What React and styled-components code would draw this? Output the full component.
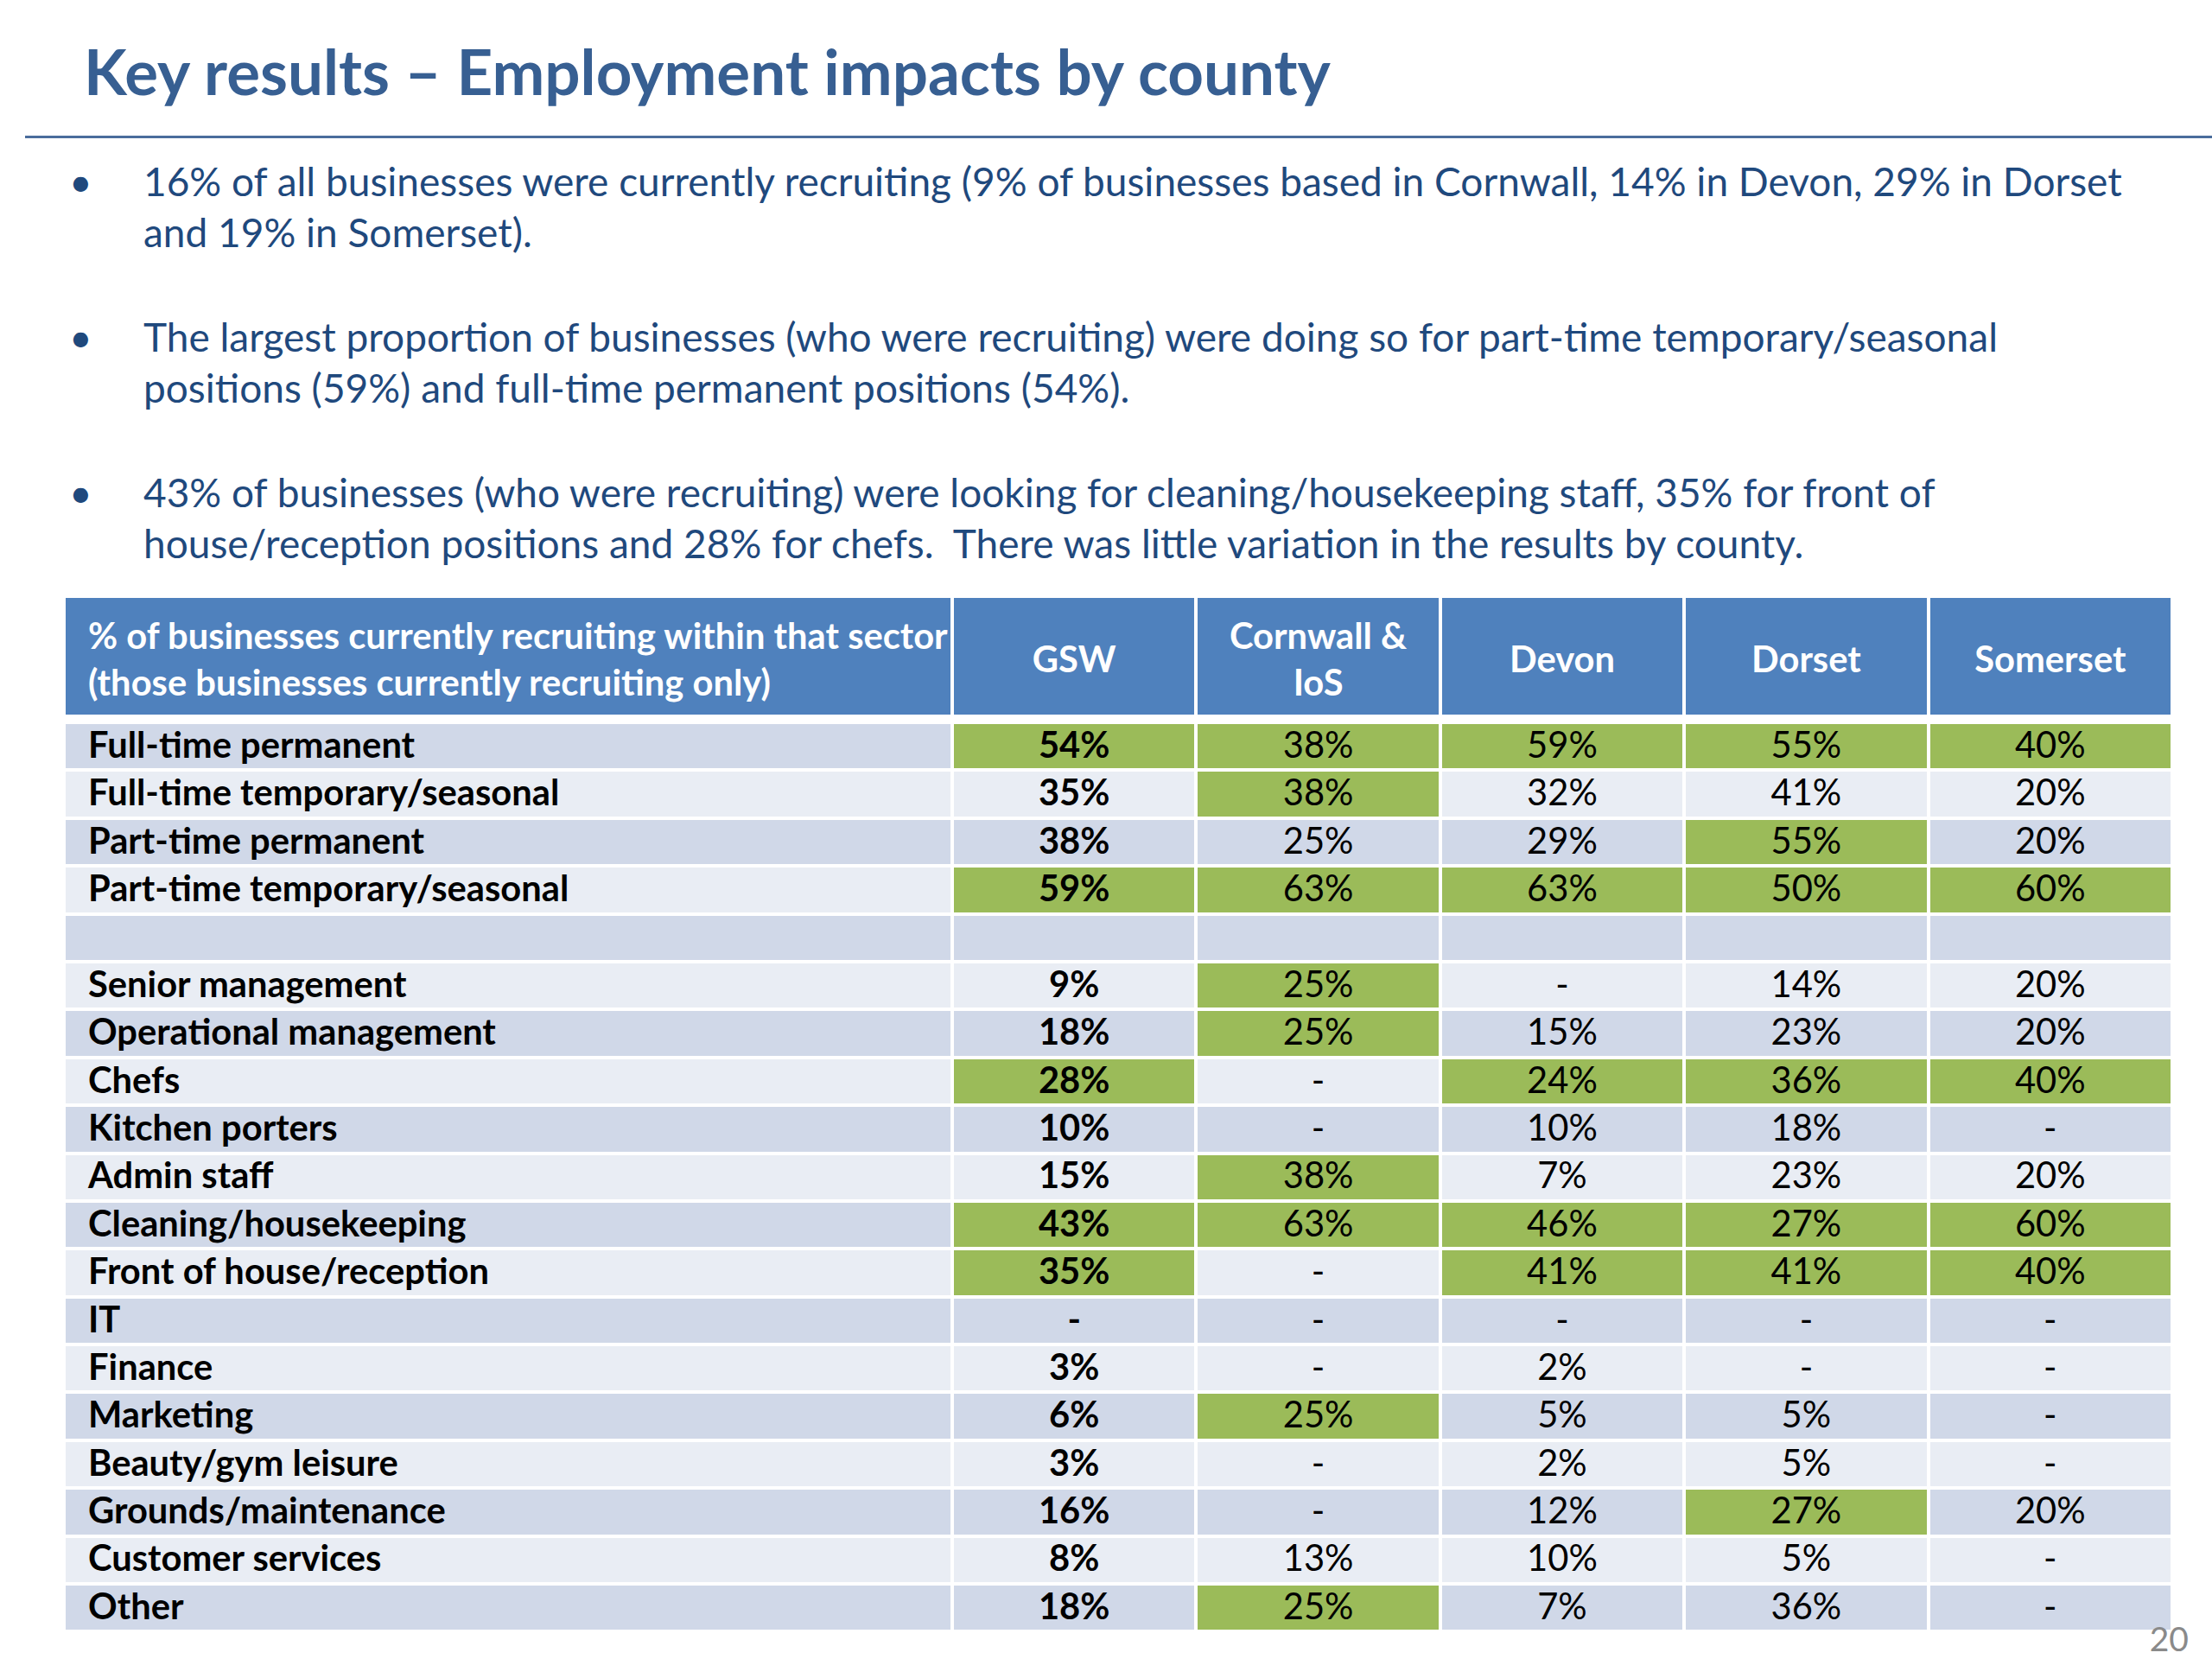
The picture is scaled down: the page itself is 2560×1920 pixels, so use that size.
import React from 'react';
import styled, { createGlobalStyle } from 'styled-components';

const GlobalStyle = createGlobalStyle`
  html, body { margin: 0; padding: 0; background: #ffffff; }
  body { font-family: Lato, "Noto Sans", sans-serif; }
  #root { width: 2560px; }
`;

const Slide = styled.div`
  width: 2560px;
  height: 1920px;
  background: #ffffff;
  display: flex;
  flex-direction: column;
  overflow: hidden;
`;

const Title = styled.h1`
  margin: 39px 0 0 97px;
  font: 700 72.7px/86px Lato, "Noto Sans", sans-serif;
  color: #375f92;
  white-space: nowrap;
`;

const Rule = styled.div`
  margin: 32px 0 0 29px;
  height: 3px;
  background: #4a6d9c;
`;

const Bullets = styled.ul`
  list-style: none;
  margin: 20px 0 0 80px;
  padding: 0;
  display: flex;
  flex-direction: column;
  gap: 62px;
`;

const BulletItem = styled.li`
  display: flex;
  font: 400 46px/59px Lato, "Noto Sans", sans-serif;
  color: #1f497d;
  white-space: nowrap;
`;

const Dot = styled.span`
  flex: none;
  width: 86px;
`;

const Table = styled.div`
  margin: 34px 0 0 76px;
  width: 2436px;
  display: flex;
  flex-direction: column;
`;

const HeadRow = styled.div`
  display: grid;
  grid-template-columns: 1024px repeat(5, 1fr);
  grid-template-rows: 135px;
  column-gap: 4px;
`;

const HeadCell = styled.div`
  background: #4f81bd;
  color: #ffffff;
  font: 700 41.7px/54px Lato, "Noto Sans", sans-serif;
  display: flex;
  align-items: center;
  justify-content: ${(p) => (p.$left ? 'flex-start' : 'center')};
  text-align: ${(p) => (p.$left ? 'left' : 'center')};
  padding: ${(p) => (p.$left ? '4px 0 0 26px' : '4px 0 0 0')};
  box-sizing: border-box;
  white-space: nowrap;
`;

const Body = styled.div`
  margin-top: 11px;
  display: flex;
  flex-direction: column;
  gap: 4px;
`;

const Row = styled.div`
  display: grid;
  grid-template-columns: 1024px repeat(5, 1fr);
  grid-template-rows: 51.4px;
  column-gap: 4px;
`;

const tones = {
  dark: '#d0d8e8',
  light: '#e9edf4',
  green: '#9bbb59',
};

const Cell = styled.div`
  background: ${(p) => tones[p.$tone]};
  color: #000000;
  font: ${(p) => (p.$bold ? 700 : 400)} 41.7px/1 Lato, "Noto Sans", sans-serif;
  display: flex;
  align-items: center;
  justify-content: ${(p) => (p.$left ? 'flex-start' : 'center')};
  padding: ${(p) => (p.$left ? '0 0 4px 26px' : '0 0 4px 0')};
  box-sizing: border-box;
  min-height: 0;
  white-space: nowrap;
`;

const Footer = styled.div`
  display: flex;
  justify-content: flex-end;
  padding-right: 27px;
  margin-top: -9px;
  font: 400 39px/39px Lato, "Noto Sans", sans-serif;
  color: #8a8a8a;
`;

const headers = [
  ['GSW'],
  ['Cornwall &', 'IoS'],
  ['Devon'],
  ['Dorset'],
  ['Somerset'],
];

// value with trailing '*' = highlighted green
const rows = [
  ['Full-time permanent', '54%*', '38%*', '59%*', '55%*', '40%*'],
  ['Full-time temporary/seasonal', '35%', '38%*', '32%', '41%', '20%'],
  ['Part-time permanent', '38%', '25%', '29%', '55%*', '20%'],
  ['Part-time temporary/seasonal', '59%*', '63%*', '63%*', '50%*', '60%*'],
  ['', '', '', '', '', ''],
  ['Senior management', '9%', '25%*', '-', '14%', '20%'],
  ['Operational management', '18%', '25%*', '15%', '23%', '20%'],
  ['Chefs', '28%*', '-', '24%*', '36%*', '40%*'],
  ['Kitchen porters', '10%', '-', '10%', '18%', '-'],
  ['Admin staff', '15%', '38%*', '7%', '23%', '20%'],
  ['Cleaning/housekeeping', '43%*', '63%*', '46%*', '27%*', '60%*'],
  ['Front of house/reception', '35%*', '-', '41%*', '41%*', '40%*'],
  ['IT', '-', '-', '-', '-', '-'],
  ['Finance', '3%', '-', '2%', '-', '-'],
  ['Marketing', '6%', '25%*', '5%', '5%', '-'],
  ['Beauty/gym leisure', '3%', '-', '2%', '5%', '-'],
  ['Grounds/maintenance', '16%', '-', '12%', '27%*', '20%'],
  ['Customer services', '8%', '13%', '10%', '5%', '-'],
  ['Other', '18%', '25%*', '7%', '36%', '-'],
];

const bullets = [
  [
    '16% of all businesses were currently recruiting (9% of businesses based in Cornwall, 14% in Devon, 29% in Dorset',
    'and 19% in Somerset).',
  ],
  [
    'The largest proportion of businesses (who were recruiting) were doing so for part-time temporary/seasonal',
    'positions (59%) and full-time permanent positions (54%).',
  ],
  [
    '43% of businesses (who were recruiting) were looking for cleaning/housekeeping staff, 35% for front of',
    'house/reception positions and 28% for chefs.\u00a0 There was little variation in the results by county.',
  ],
];

export default function App() {
  return (
    <>
      <GlobalStyle />
      <Slide>
        <Title>Key results – Employment impacts by county</Title>
        <Rule />
        <Bullets>
          {bullets.map((lines, i) => (
            <BulletItem key={i}>
              <Dot>•</Dot>
              <span>
                {lines[0]}
                <br />
                {lines[1]}
              </span>
            </BulletItem>
          ))}
        </Bullets>
        <Table>
          <HeadRow>
            <HeadCell $left>
              <span>
                % of businesses currently recruiting within that sector
                <br />
                (those businesses currently recruiting only)
              </span>
            </HeadCell>
            {headers.map((h, i) => (
              <HeadCell key={i}>
                <span>
                  {h.map((line, j) => (
                    <React.Fragment key={j}>
                      {j > 0 && <br />}
                      {line}
                    </React.Fragment>
                  ))}
                </span>
              </HeadCell>
            ))}
          </HeadRow>
          <Body>
            {rows.map((r, i) => {
              const base = i % 2 === 0 ? 'dark' : 'light';
              return (
                <Row key={i}>
                  <Cell $tone={base} $left $bold>
                    {r[0]}
                  </Cell>
                  {r.slice(1).map((v, j) => {
                    const green = v.endsWith('*');
                    return (
                      <Cell key={j} $tone={green ? 'green' : base} $bold={j === 0}>
                        {green ? v.slice(0, -1) : v}
                      </Cell>
                    );
                  })}
                </Row>
              );
            })}
          </Body>
        </Table>
        <Footer>20</Footer>
      </Slide>
    </>
  );
}
